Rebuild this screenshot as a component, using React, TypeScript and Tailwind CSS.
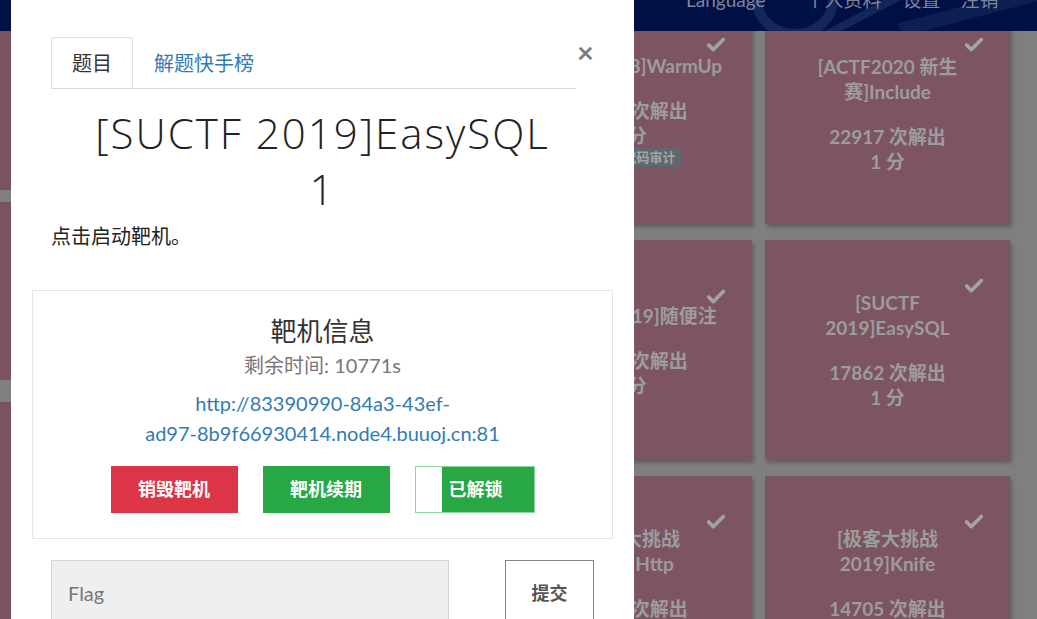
import { Check } from 'lucide-react'

const lato = "font-['Lato','Noto_Sans_CJK_SC',sans-serif]"

interface CardProps {
  lines: string[]
  stats: string[]
  badges?: string[]
  checkTop: number
}

function ChallengeCard({ lines, stats, badges, checkTop }: CardProps) {
  return (
    <div className="relative flex h-[220px] w-[245px] shrink-0 flex-col items-center justify-center bg-[#7d5461] text-center text-[19px] leading-[25px] font-bold text-[#9c9c9c] shadow-[2px_3px_4px_rgba(0,0,0,0.25)]">
      {/* solved mark */}
      <Check
        className="absolute right-[25px] h-[22px] w-[22px] text-[#a3a3a3]"
        strokeWidth={4}
        style={{ top: checkTop }}
      />
      <div>
        {lines.map((l) => (
          <div key={l}>{l}</div>
        ))}
      </div>
      <div className="mt-[20px]">
        {stats.map((s) => (
          <div key={s}>{s}</div>
        ))}
      </div>
      {badges && (
        <div className="mb-[8px] flex gap-[4px]">
          {badges.map((b) => (
            <span
              key={b}
              className="rounded-[4px] bg-[#5f6770] px-[5px] text-[13px] leading-[19px] text-[#a5a5a5]"
            >
              {b}
            </span>
          ))}
        </div>
      )}
    </div>
  )
}

function Backdrop() {
  return (
    <div className={`flex h-full w-full ${lato}`}>
      {/* first column, mostly under the modal */}
      <div className="flex w-[11px] shrink-0 flex-col">
        <div className="h-[190px] shrink-0 bg-[#7b5260]" />
        <div className="h-[12px] shrink-0" />
        <div className="h-[178px] shrink-0 bg-[#7b5260]" />
        <div className="h-[22px] shrink-0" />
        <div className="h-[300px] shrink-0 bg-[#7b5260]" />
      </div>
      <div className="flex shrink-0 gap-[13px] pl-[496px]">
        <div className="flex flex-col gap-[16px] pt-[4px]">
          <ChallengeCard
            lines={['[HCTF 2018]WarmUp']}
            stats={['25384 次解出', '1 分']}
            badges={['PHP', '代码审计']}
            checkTop={30}
          />
          <ChallengeCard lines={['[强网杯 2019]随便注']} stats={['20456 次解出', '1 分']} checkTop={46} />
          <ChallengeCard lines={['[极客大挑战', '2019]Http']} stats={['15833 次解出', '1 分']} checkTop={35} />
        </div>
        <div className="flex flex-col gap-[16px] pt-[4px]">
          <ChallengeCard lines={['[ACTF2020 新生', '赛]Include']} stats={['22917 次解出', '1 分']} checkTop={30} />
          <ChallengeCard lines={['[SUCTF', '2019]EasySQL']} stats={['17862 次解出', '1 分']} checkTop={35} />
          <ChallengeCard lines={['[极客大挑战', '2019]Knife']} stats={['14705 次解出', '1 分']} checkTop={35} />
        </div>
      </div>
    </div>
  )
}

function Header() {
  return (
    <div className={`absolute inset-x-0 top-0 h-[31px] overflow-hidden bg-[#001044] ${lato}`}>
      <svg className="absolute left-[700px] top-[-40px]" width="337" height="80" viewBox="0 0 337 80" aria-hidden="true">
        <ellipse cx="95" cy="40" rx="38" ry="34" fill="none" stroke="#14265a" strokeWidth="10" />
        <path d="M120 78 L230 20" stroke="#14265a" strokeWidth="8" />
        <path d="M200 70 L337 34" stroke="#0d1f52" strokeWidth="14" />
      </svg>
      <div className="relative -mt-[10px] flex items-center pl-[686px] text-[19px] leading-[20px] text-[#7d849b]">
        <span>Language</span>
        <span className="ml-[40px]">个人资料</span>
        <span className="ml-[21px]">设置</span>
        <span className="ml-[20px]">注销</span>
      </div>
    </div>
  )
}

function TargetInfo() {
  return (
    <div className="-mx-[19px] mt-[40px] border border-[#e6e6e6] px-[20px] pb-[25px] pt-[22px] text-center">
      <div className="text-[26px] leading-[36px] text-[#333]">靶机信息</div>
      <div className="mt-[2px] text-[20px] leading-[28px] text-[#777]">剩余时间: 10771s</div>
      <div className="mt-[9px] text-[20px] leading-[30px] text-[#337ab7]">
        http://83390990-84a3-43ef-
        <br />
        ad97-8b9f66930414.node4.buuoj.cn:81
      </div>
      <div className="mt-[18px] flex justify-center gap-[25px] text-[18px] font-bold text-white">
        <button className="h-[47px] w-[127px] bg-[#dc3545]">销毁靶机</button>
        <button className="h-[47px] w-[127px] bg-[#28a745]">靶机续期</button>
        <button className="flex h-[47px] w-[120px] border border-[#8fd69d] bg-[#28a745]">
          <span className="h-full w-[26px] bg-white" />
          <span className="flex flex-1 items-center pl-[7px]">已解锁</span>
        </button>
      </div>
    </div>
  )
}

function Modal() {
  return (
    <div className={`absolute left-[11px] top-0 h-[619px] w-[623px] overflow-hidden bg-white px-[40px] pt-[37px] text-[#333] ${lato}`}>
      <div className="flex">
        <div className="flex w-[526px] border-b border-[#ddd] text-[20px]">
          <div className="-mb-px flex h-[51px] w-[82px] items-center justify-center rounded-t-[4px] border border-b-white border-[#ddd] bg-white text-[#333]">
            题目
          </div>
          <div className="flex h-[51px] items-center pl-[21px] text-[#337ab7]">解题快手榜</div>
        </div>
        <button className="ml-[1px] -mt-[3px] h-[36px] w-[17px] text-[29px] font-bold leading-[36px] text-[#7b7b7b]">×</button>
      </div>

      <h1 className="mt-[16px] text-center font-['Open_Sans',sans-serif] text-[42px] leading-[56px] font-light tracking-[2px] text-[#222]">
        [SUCTF 2019]EasySQL
        <br />1
      </h1>

      <p className="mt-[5px] text-[20px] leading-[28px] text-[#222]">点击启动靶机。</p>

      <TargetInfo />

      <div className="mt-[21px] flex justify-between">
        <div className="flex h-[70px] w-[398px] items-start border border-[#cfd6dd] bg-[#efefef] pl-[16px] pt-[17px] text-[20px] text-[#777]">
          Flag
        </div>
        <button className="flex h-[70px] w-[89px] items-start justify-center border border-[#7e8791] bg-white pt-[19px] text-[18px] font-bold text-[#555]">
          提交
        </button>
      </div>
    </div>
  )
}

export default function App() {
  return (
    <div className="relative h-[619px] w-[1037px] overflow-hidden bg-[#7f7f7f]">
      <Backdrop />
      <Header />
      <Modal />
    </div>
  )
}
